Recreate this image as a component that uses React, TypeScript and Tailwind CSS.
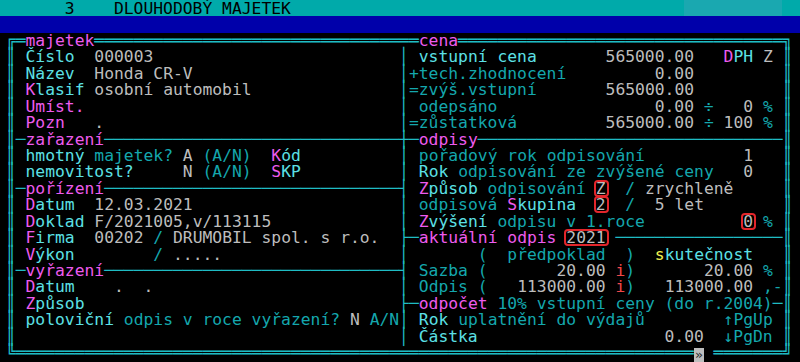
import type { ReactNode } from 'react';

// one text cell = 9.84px, one row = 16.45px (80x22 text screen)
type Seg = [number, string, string, boolean?];

const tone: Record<string, string> = {
  l: 'text-[#1fbcc4]',
  b: 'text-[#5ce0e6]',
  d: 'text-[#14a7ad]',
  m: 'text-[#ee5bee]',
  g: 'text-[#bdbdbd]',
  y: 'text-[#f0f050]',
  r: 'text-[#f04848]',
  k: 'text-black',
};

const line = (ch: string, n: number) => ch.repeat(n);

function Cells({ segs }: { segs: Seg[] }) {
  const out: ReactNode[] = [];
  let col = 0;
  segs.forEach(([at, text, c, boxed], i) => {
    if (at > col) out.push(<span key={`s${i}`}>{' '.repeat(at - col)}</span>);
    out.push(
      boxed ? (
        <span key={i} className={`relative ${tone[c]}`}>
          {text}
          <span className="absolute -left-[2px] -right-[3px] top-[1px] bottom-[1px] rounded-[4px] border-2 border-[#e3262b]" />
        </span>
      ) : (
        <span key={i} className={tone[c]}>
          {text}
        </span>
      )
    );
    col = at + text.length;
  });
  return <>{out}</>;
}

function Row({ segs }: { segs: Seg[] }) {
  return (
    <div className="h-[16.45px] whitespace-pre pl-[5.8px]">
      <Cells segs={segs} />
    </div>
  );
}

// body row: outer double frame, divider (or junction) in column 40
const mid = (left: Seg[], right: Seg[], join = '│'): Seg[] => [
  [0, '║', 'l'],
  ...left,
  [40, join, 'l'],
  ...right,
  [79, '║', 'l'],
];

const rows: Seg[][] = [
  [[0, '╔', 'l'], [1, '═', 'l'], [2, 'majetek', 'm'], [9, line('═', 32), 'l'], [41, '═', 'l'], [42, 'cena', 'm'], [46, line('═', 33), 'l'], [79, '╗', 'l']],
  mid(
    [[2, 'Číslo', 'b'], [9, '000003', 'g']],
    [[42, 'vstupní cena', 'b'], [61, '565000.00', 'g'], [73, 'D', 'm'], [74, 'PH', 'b'], [77, 'Z', 'g']]
  ),
  mid(
    [[2, 'Název', 'b'], [9, 'Honda CR-V', 'g']],
    [[41, '+tech.zhodnocení', 'd'], [66, '0.00', 'g']]
  ),
  mid(
    [[2, 'K', 'm'], [3, 'lasif', 'b'], [9, 'osobní automobil', 'g']],
    [[41, '=zvýš.vstupní', 'd'], [61, '565000.00', 'g']]
  ),
  mid(
    [[2, 'Umíst.', 'm']],
    [[42, 'odepsáno', 'd'], [66, '0.00', 'g'], [71, '÷', 'd'], [75, '0', 'g'], [77, '%', 'd']]
  ),
  mid(
    [[2, 'Pozn', 'm'], [9, '.', 'g']],
    [[41, '=zůstatková', 'd'], [61, '565000.00', 'g'], [71, '÷', 'd'], [73, '100', 'g'], [77, '%', 'd']]
  ),
  mid(
    [[1, '─', 'l'], [2, 'zařazení', 'm'], [10, line('─', 30), 'l']],
    [[41, '─', 'l'], [42, 'odpisy', 'm'], [48, line('─', 31), 'l']],
    '┼'
  ),
  mid(
    [[2, 'hmotný', 'b'], [9, 'majetek?', 'd'], [18, 'A', 'g'], [20, '(A/N)', 'd'], [27, 'K', 'm'], [28, 'ód', 'b']],
    [[42, 'pořadový rok odpisování', 'd'], [75, '1', 'g']]
  ),
  mid(
    [[2, 'nemovitost?', 'b'], [18, 'N', 'g'], [20, '(A/N)', 'd'], [27, 'S', 'm'], [28, 'KP', 'b']],
    [[42, 'Rok', 'b'], [46, 'odpisování ze zvýšené ceny', 'd'], [75, '0', 'g']]
  ),
  mid(
    [[1, '─', 'l'], [2, 'pořízení', 'm'], [10, line('─', 30), 'l']],
    [[42, 'Z', 'm'], [43, 'působ', 'b'], [49, 'odpisování', 'd'], [60, 'Z', 'g', true], [63, '/', 'd'], [65, 'zrychleně', 'g']],
    '┤'
  ),
  mid(
    [[2, 'D', 'm'], [3, 'atum', 'b'], [9, '12.03.2021', 'g']],
    [[42, 'odpisová', 'd'], [51, 'S', 'm'], [52, 'kupina', 'b'], [60, '2', 'g', true], [63, '/', 'd'], [66, '5 let', 'g']]
  ),
  mid(
    [[2, 'D', 'm'], [3, 'oklad', 'b'], [9, 'F/2021005,v/113115', 'g']],
    [[42, 'Z', 'm'], [43, 'výšení', 'b'], [50, 'odpisu v 1.roce', 'd'], [75, '0', 'g', true], [77, '%', 'd']]
  ),
  mid(
    [[2, 'F', 'm'], [3, 'irma', 'b'], [9, '00202', 'g'], [15, '/', 'd'], [17, 'DRUMOBIL spol. s r.o.', 'g']],
    [[41, '─', 'l'], [42, 'aktuální odpis', 'm'], [57, '2021', 'g', true], [62, line('─', 17), 'l']],
    '├'
  ),
  mid(
    [[2, 'V', 'm'], [3, 'ýkon', 'b'], [15, '/', 'd'], [17, '.....', 'g']],
    [[48, '(', 'd'], [51, 'předpoklad', 'd'], [63, ')', 'd'], [66, 's', 'y'], [67, 'kutečnost', 'b']]
  ),
  mid(
    [[1, '─', 'l'], [2, 'vyřazení', 'm'], [10, line('─', 30), 'l']],
    [[42, 'Sazba', 'd'], [48, '(', 'd'], [56, '20.00', 'g'], [62, 'i', 'r'], [63, ')', 'd'], [71, '20.00', 'g'], [77, '%', 'd']],
    '┤'
  ),
  mid(
    [[2, 'D', 'm'], [3, 'atum', 'b'], [11, '.', 'g'], [14, '.', 'g']],
    [[42, 'Odpis', 'd'], [48, '(', 'd'], [52, '113000.00', 'g'], [62, 'i', 'r'], [63, ')', 'd'], [67, '113000.00', 'g'], [77, ',-', 'd']]
  ),
  mid(
    [[2, 'Z', 'm'], [3, 'působ', 'b']],
    [[41, '─', 'l'], [42, 'odpočet', 'm'], [50, '10% vstupní ceny (do r.2004)', 'd'], [78, '─', 'l']],
    '├'
  ),
  mid(
    [[2, 'poloviční', 'b'], [12, 'odpis v roce vyřazení?', 'd'], [35, 'N', 'g'], [37, 'A/N', 'd']],
    [[42, 'Rok', 'b'], [46, 'uplatnění do výdajů', 'd'], [73, '↑PgUp', 'd']]
  ),
  mid([], [[42, 'Částka', 'b'], [67, '0.00', 'g'], [73, '↓PgDn', 'd']]),
];

export default function App() {
  return (
    <div className="w-[800px] h-[362px] overflow-hidden bg-black font-['DejaVu_Sans_Mono',monospace] text-[16.34px] leading-[16.45px]">
      {/* title bar */}
      <div className="flex h-[16.45px] items-end whitespace-pre bg-[#00aaaa] pl-[5.8px] text-black">
        <span className="leading-[15px]">{'      3    DLOUHODOBÝ MAJETEK' + ' '.repeat(69 - 29)}</span>
        <span className="h-full w-[98.4px] bg-[#1aa8b0]" />
      </div>
      <div className="h-[16.45px] bg-[#0000aa]" />

      {rows.map((segs, i) => (
        <Row key={i} segs={segs} />
      ))}

      {/* bottom frame with the scroll marker */}
      <div className="h-[16.45px] whitespace-pre pl-[5.8px] text-[#1fbcc4]">
        {'╚' + line('═', 69)}
        <span className="inline-block h-[14px] w-[9.84px] bg-[#bdbdbd] text-center align-bottom text-[13px] leading-[14px] text-[#2a2a2a]">
          »
        </span>
        {' ' + line('═', 7) + '╝'}
      </div>
    </div>
  );
}
